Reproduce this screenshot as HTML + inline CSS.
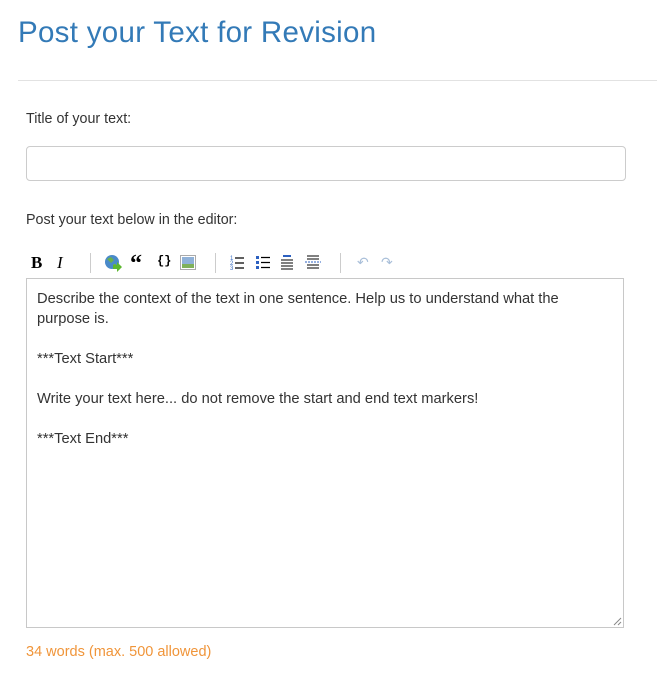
<!DOCTYPE html>
<html><head><meta charset="utf-8"><style>
body{margin:0;background:#fff;font-family:"Liberation Sans",sans-serif;color:#333;width:657px;height:676px;overflow:hidden;position:relative}
.a{position:absolute}
h1{position:absolute;left:18px;top:16px;margin:0;font-weight:normal;font-size:29.5px;color:#337ab7;letter-spacing:0.3px}
.hr{left:18px;top:80px;width:639px;height:1px;background:#e2e2e2}
.lbl{font-size:14.3px;color:#333}
.inp{left:26px;top:146px;width:598px;height:33px;border:1px solid #ccc;border-radius:4px}
.ed{left:26px;top:278px;width:596px;height:348px;border:1px solid #c8c8c8;font-size:14.7px;line-height:20px;padding:0}
.ed div{position:absolute;left:10px;white-space:nowrap}
.sep{width:1px;height:20px;background:#ccc;top:253px}
.cnt{left:26px;top:644px;font-size:14.5px;color:#f0953a}
</style></head><body>
<h1>Post your Text for Revision</h1>
<div class="a hr"></div>
<div class="a lbl" style="left:26px;top:111px">Title of your text:</div>
<div class="a inp"></div>
<div class="a lbl" style="left:26px;top:212px">Post your text below in the editor:</div>
<div class="a" style="left:31px;top:253px;font:bold 17px 'Liberation Serif',serif;color:#000">B</div>
<div class="a" style="left:57px;top:253px;font:italic 17px 'Liberation Serif',serif;color:#000">I</div>
<div class="a sep" style="left:90px"></div>
<svg class="a" style="left:104px;top:254px" width="18" height="18"><circle cx="8" cy="8" r="7" fill="#4a8ac9"/><path d="M3 5 l4 -2 l3 3 l-3 3z M9 10 l3 0 l0 3z" fill="#6ab04c"/><path d="M9 11 h4 v-3 l5 5 l-5 5 v-3 h-4z" fill="#5cb82f"/></svg>
<div class="a" style="left:130px;top:249px;font:bold 24px 'Liberation Serif',serif;color:#000;line-height:30px">“</div>
<div class="a" style="left:157px;top:254px;font:bold 12px 'Liberation Mono',monospace;color:#000">{}</div>
<svg class="a" style="left:180px;top:255px" width="16" height="15"><rect x="0.5" y="0.5" width="15" height="14" fill="#fff" stroke="#aaa"/><rect x="2" y="2" width="12" height="7" fill="#8fb1d8"/><rect x="2" y="9" width="12" height="4" fill="#7fb15a"/></svg>
<div class="a sep" style="left:215px"></div>
<svg class="a" style="left:230px;top:255px" width="16" height="16"><text x="0" y="5" font-size="6" fill="#3a6fc4" font-family="Liberation Sans">1</text><text x="0" y="10" font-size="6" fill="#3a6fc4" font-family="Liberation Sans">2</text><text x="0" y="15" font-size="6" fill="#3a6fc4" font-family="Liberation Sans">3</text><path d="M5 3h9M5 8h9M5 13h9" stroke="#000" stroke-width="1.2"/></svg>
<svg class="a" style="left:256px;top:255px" width="16" height="16"><rect x="0" y="1" width="3" height="3" fill="#2c60c0"/><rect x="0" y="6" width="3" height="3" fill="#2c60c0"/><rect x="0" y="11" width="3" height="3" fill="#2c60c0"/><path d="M5 2.5h9M5 7.5h9M5 12.5h9" stroke="#000" stroke-width="1.2"/></svg>
<svg class="a" style="left:281px;top:254px" width="14" height="16"><rect x="2" y="1" width="8" height="2" fill="#2c60c0"/><path d="M0 6h12M0 9h12M0 12h12M0 15h12" stroke="#000" stroke-width="1"/></svg>
<svg class="a" style="left:305px;top:254px" width="16" height="16"><path d="M2 2h12M2 5h12M2 11h12M2 14h12" stroke="#000" stroke-width="1"/><path d="M0 8h16" stroke="#2c60c0" stroke-dasharray="2 1"/></svg>
<div class="a sep" style="left:340px"></div>
<div class="a" style="left:357px;top:254px;font-size:14px;color:#a9bfd9">↶</div>
<div class="a" style="left:381px;top:254px;font-size:14px;color:#a9bfd9">↷</div>
<div class="a ed">
<div style="top:10px">Describe the context of the text in one sentence. Help us to understand what the</div>
<div style="top:30px">purpose is.</div>
<div style="top:70px">***Text Start***</div>
<div style="top:110px">Write your text here... do not remove the start and end text markers!</div>
<div style="top:150px">***Text End***</div>
<svg style="position:absolute;right:1px;bottom:1px" width="9" height="9"><path d="M8 1L1 8M8 5L5 8" stroke="#888"/></svg>
</div>
<div class="a cnt">34 words (max. 500 allowed)</div>
</body></html>
